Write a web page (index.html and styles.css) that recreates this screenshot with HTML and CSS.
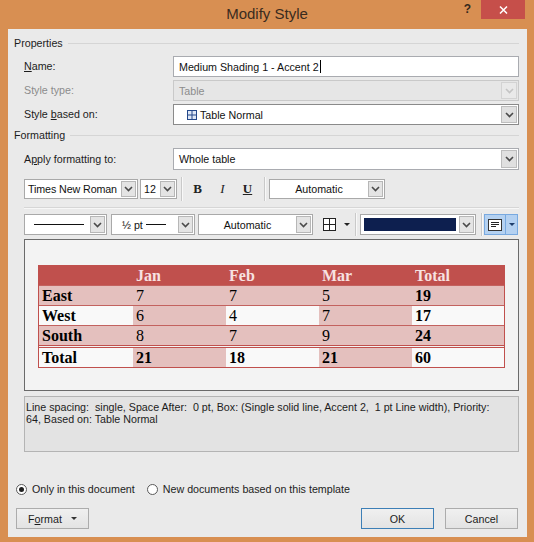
FILE: index.html
```html
<!DOCTYPE html>
<html>
<head>
<meta charset="utf-8">
<title>Modify Style</title>
<link rel="stylesheet" href="styles.css">
</head>
<body>
<div class="window">
  <div class="titlebar">
    <div></div>
    <div class="title">Modify Style</div>
    <div class="controls">
      <span class="help">?</span>
      <span class="close"><svg width="9" height="8" viewBox="0 0 9 8"><path d="M1 0.5 L8 7.5 M8 0.5 L1 7.5" stroke="#fff" stroke-width="1.5" fill="none"/></svg></span>
    </div>
  </div>
  <div class="panel">
    <div class="group-head"><span>Properties</span><i></i></div>
    <div class="props">
      <label class="lbl"><u>N</u>ame:</label>
      <div class="field"><span class="val">Medium Shading 1 - Accent 2</span><span class="caret"></span></div>
      <label class="lbl disabled">Style type:</label>
      <div class="field disabled"><span class="val">Table</span><span class="arrow"><svg width="9" height="6" viewBox="0 0 9 6"><path d="M1 1 L4.5 4.5 L8 1" stroke="#c4c4c4" stroke-width="1.6" fill="none"/></svg></span></div>
      <label class="lbl">Style <u>b</u>ased on:</label>
      <div class="field dark"><span class="val icon-val"><svg class="tblicon" width="10" height="10" viewBox="0 0 10 10"><rect x="0.5" y="0.5" width="9" height="9" fill="#dfe8f6" stroke="#24488a"/><path d="M5 0.5 V9.5 M0.5 5 H9.5" stroke="#24488a"/></svg>Table Normal</span><span class="arrow"><svg width="9" height="6" viewBox="0 0 9 6"><path d="M1 1 L4.5 4.5 L8 1" stroke="#4a4a4a" stroke-width="1.6" fill="none"/></svg></span></div>
    </div>
    <div class="group-head second"><span>Formatting</span><i></i></div>
    <div class="props apply">
      <label class="lbl">A<u>p</u>ply formatting to:</label>
      <div class="field tall"><span class="val">Whole table</span><span class="arrow"><svg width="9" height="6" viewBox="0 0 9 6"><path d="M1 1 L4.5 4.5 L8 1" stroke="#4a4a4a" stroke-width="1.6" fill="none"/></svg></span></div>
    </div>

    <div class="toolbar tb1">
      <div class="combo w-font"><span class="ctext">Times New Roman</span><span class="carrow"><svg width="9" height="6" viewBox="0 0 9 6"><path d="M1 1 L4.5 4.5 L8 1" stroke="#4a4a4a" stroke-width="1.6" fill="none"/></svg></span></div>
      <div class="combo w-size"><span class="ctext">12</span><span class="carrow"><svg width="9" height="6" viewBox="0 0 9 6"><path d="M1 1 L4.5 4.5 L8 1" stroke="#4a4a4a" stroke-width="1.6" fill="none"/></svg></span></div>
      <span class="sep s1"></span>
      <span class="fbtn bold">B</span>
      <span class="fbtn ital">I</span>
      <span class="fbtn und">U</span>
      <span class="sep s2"></span>
      <div class="combo w-auto1"><span class="ctext center">Automatic</span><span class="carrow"><svg width="9" height="6" viewBox="0 0 9 6"><path d="M1 1 L4.5 4.5 L8 1" stroke="#4a4a4a" stroke-width="1.6" fill="none"/></svg></span></div>
    </div>
    <div class="divider"></div>
    <div class="toolbar tb2">
      <div class="combo w-line"><span class="ctext"><span class="linesample"></span></span><span class="carrow"><svg width="9" height="6" viewBox="0 0 9 6"><path d="M1 1 L4.5 4.5 L8 1" stroke="#4a4a4a" stroke-width="1.6" fill="none"/></svg></span></div>
      <div class="combo w-pt"><span class="ctext pt">½ pt<span class="ptline"></span></span><span class="carrow"><svg width="9" height="6" viewBox="0 0 9 6"><path d="M1 1 L4.5 4.5 L8 1" stroke="#4a4a4a" stroke-width="1.6" fill="none"/></svg></span></div>
      <div class="combo w-auto2"><span class="ctext center">Automatic</span><span class="carrow"><svg width="9" height="6" viewBox="0 0 9 6"><path d="M1 1 L4.5 4.5 L8 1" stroke="#4a4a4a" stroke-width="1.6" fill="none"/></svg></span></div>
      <span class="borderbtn"><svg width="13" height="13" viewBox="0 0 13 13"><rect x="0.5" y="0.5" width="12" height="12" fill="#fff" stroke="#222"/><path d="M6.5 0.5 V12.5 M0.5 6.5 H12.5" stroke="#222"/></svg><span class="tri"></span></span>
      <span class="sep s3"></span>
      <div class="combo w-color"><span class="swatch"></span><span class="carrow"><svg width="9" height="6" viewBox="0 0 9 6"><path d="M1 1 L4.5 4.5 L8 1" stroke="#4a4a4a" stroke-width="1.6" fill="none"/></svg></span></div>
      <span class="sep s4"></span>
      <span class="alignbtn"><span class="aicon"><svg width="14" height="12" viewBox="0 0 14 12"><rect x="0.5" y="0.5" width="13" height="11" fill="#fff" stroke="#333"/><path d="M3 3.5 H11 M3 5.5 H11 M3 7.5 H8" stroke="#222"/></svg></span><span class="adrop"><span class="tri blue"></span></span></span>
    </div>

    <div class="preview">
      <div class="tbl">
        <div class="row hdr"><span></span><span>Jan</span><span>Feb</span><span>Mar</span><span>Total</span></div>
        <div class="row band"><span class="b">East</span><span>7</span><span>7</span><span>5</span><span class="b">19</span></div>
        <div class="row"><span class="b">West</span><span class="pk">6</span><span>4</span><span class="pk">7</span><span class="b">17</span></div>
        <div class="row band"><span class="b">South</span><span>8</span><span>7</span><span>9</span><span class="b">24</span></div>
        <div class="row tot"><span class="b">Total</span><span class="pk b">21</span><span class="b">18</span><span class="pk b">21</span><span class="b">60</span></div>
      </div>
    </div>

    <div class="desc">Line spacing:&nbsp; single, Space After:&nbsp; 0 pt, Box: (Single solid line, Accent 2,&nbsp; 1 pt Line width), Priority:<br>64, Based on: Table Normal</div>

    <div class="radios">
      <span class="radio on"></span><span class="rlabel">Only in this document</span>
      <span class="radio r2"></span><span class="rlabel">New documents based on this template</span>
    </div>

    <div class="buttons">
      <span class="btn fmt">F<u>o</u>rmat<span class="tri small"></span></span>
      <span class="spacer"></span>
      <span class="btn ok">OK</span>
      <span class="btn cancel">Cancel</span>
    </div>
  </div>
</div>
</body>
</html>
```

FILE: styles.css
```css
* { box-sizing: border-box; }
html, body { margin: 0; padding: 0; }
body {
  width: 534px;
  height: 542px;
  overflow: hidden;
  background: #d88f52;
  font-family: "Liberation Sans", Arial, sans-serif;
  font-size: 10.7px;
  color: #1c1c1c;
}
u { text-decoration: underline; text-underline-offset: 1px; }

.window {
  display: flex;
  flex-direction: column;
  height: 542px;
  padding: 0 7px 5px 8px;
}
.titlebar {
  height: 29px;
  margin: 0 -7px 0 -8px;
  display: grid;
  grid-template-columns: 1fr auto 1fr;
}
.title {
  font-size: 15px;
  line-height: 20px;
  padding-top: 4px;
  color: #3a2b1e;
}
.controls {
  display: flex;
  justify-content: flex-end;
  align-items: flex-start;
  padding-right: 9px;
}
.help {
  font-weight: bold;
  font-size: 12px;
  line-height: 14px;
  padding-top: 2px;
  margin-right: 10px;
  color: #35281c;
}
.close {
  width: 44px;
  height: 19px;
  background: #c64f4a;
  display: flex;
  align-items: center;
  justify-content: center;
}

.panel {
  flex: 1;
  background: #eaeaea;
  padding: 6px 8px 0 6px;
  display: flex;
  flex-direction: column;
}
.group-head {
  display: flex;
  align-items: center;
  height: 16px;
  gap: 5px;
  color: #1c1c1c;
}
.group-head i {
  flex: 1;
  height: 1px;
  background: #d5d5d5;
  margin-top: 1px;
}
.group-head.second { margin-top: 2px; }

.props {
  margin: 5px 0 0 10px;
  display: grid;
  grid-template-columns: 149px 1fr;
  grid-auto-rows: 21px;
  row-gap: 3px;
}
.props.apply { grid-auto-rows: 22px; }
.lbl {
  display: block;
  line-height: 21px;
  white-space: nowrap;
  color: #1c1c1c;
}
.props.apply .lbl { line-height: 22px; }
.lbl.disabled { color: #8c8c8c; }
.field {
  height: 21px;
  border: 1px solid #a9abb0;
  background: #fff;
  display: flex;
  align-items: center;
  padding-left: 5px;
  color: #111;
}
.field.tall { height: 22px; }
.field.dark { border-color: #8a8a8a; }
.field.disabled {
  background: #e6e6e6;
  border-color: #c9c9c9;
  color: #8c8c8c;
}
.caret {
  width: 1px;
  height: 13px;
  background: #000;
  margin-left: 1px;
}
.icon-val {
  display: flex;
  align-items: center;
  padding-left: 8px;
}
.tblicon { margin-right: 3px; }
.arrow {
  width: 16px;
  align-self: stretch;
  margin: 1px 1px 1px auto;
  background: #e0e0e0;
  border: 1px solid #bdbdbd;
  display: flex;
  align-items: center;
  justify-content: center;
}
.field.disabled .arrow { background: #e9e9e9; border-color: #d3d3d3; }

.toolbar {
  margin-left: 10px;
  display: flex;
  align-items: center;
}
.tb1 { margin-top: 9px; height: 20px; }
.tb2 { margin-top: 5px; height: 21px; }
.combo {
  height: 20px;
  border: 1px solid #a9a9a9;
  background: #fff;
  display: flex;
  align-items: center;
  padding: 1px;
  color: #111;
}
.tb2 .combo { height: 21px; }
.ctext {
  flex: 1;
  min-width: 0;
  padding-left: 3px;
  white-space: nowrap;
  display: flex;
  align-items: center;
}
.w-font .ctext { padding-left: 2px; letter-spacing: -0.1px; }
.ctext.center { justify-content: center; padding-left: 0; }
.carrow {
  width: 15px;
  flex: none;
  align-self: stretch;
  background: #e4e4e4;
  border: 1px solid #b7b7b7;
  display: flex;
  align-items: center;
  justify-content: center;
  margin-left: 1px;
}
.w-font { width: 114px; }
.w-size { width: 37px; margin-left: 2px; }
.w-size .ctext { padding-left: 2px; }
.sep {
  width: 1px;
  height: 24px;
  background: #c9c9c9;
  box-shadow: 1px 0 0 #f8f8f8;
}
.s1 { margin-left: 4px; }
.s2 { margin-left: 4px; }
.fbtn {
  width: 25px;
  text-align: center;
  font-family: "Liberation Serif", serif;
  font-size: 13px;
  color: #222;
}
.bold { font-weight: bold; margin-left: 3px; }
.ital { font-style: italic; }
.und { font-weight: bold; text-decoration: underline; text-underline-offset: 1px; }
.w-auto1 { width: 116px; margin-left: 4px; }

.divider {
  margin: 8px 0 0 10px;
  height: 2px;
  border-top: 1px solid #d6d6d6;
  border-bottom: 1px solid #f7f7f7;
}

.w-line { width: 83px; }
.linesample {
  width: 50px;
  height: 1px;
  background: #111;
  margin-left: 5px;
}
.w-pt { width: 84px; margin-left: 4px; }
.ctext.pt { padding-left: 9px; }
.ptline {
  width: 20px;
  height: 1px;
  background: #111;
  margin-left: 3px;
}
.w-auto2 { width: 115px; margin-left: 3px; }
.borderbtn {
  display: flex;
  align-items: center;
  margin-left: 10px;
}
.tri {
  width: 0;
  height: 0;
  border-left: 3px solid transparent;
  border-right: 3px solid transparent;
  border-top: 3px solid #222;
  margin-left: 8px;
}
.tri.blue { border-top-color: #1d3d6b; margin-left: 0; }
.s3 { margin-left: 5px; height: 23px; }
.w-color { width: 116px; margin-left: 4px; }
.swatch {
  flex: 1;
  align-self: stretch;
  margin: 2px 2px;
  background: #0d1f4f;
}
.s4 { margin-left: 5px; height: 23px; }
.alignbtn {
  margin-left: 2px;
  width: 34px;
  height: 21px;
  display: flex;
  background: #b4d1f1;
  border: 1px solid #78a9e0;
}
.aicon {
  width: 21px;
  display: flex;
  align-items: center;
  justify-content: center;
  border-right: 1px solid #78a9e0;
}
.adrop {
  flex: 1;
  display: flex;
  align-items: center;
  justify-content: center;
}

.preview {
  margin: 4px 0 0 10px;
  height: 152px;
  border: 1px solid #6a6a6a;
  background: #f3f3f3;
  padding: 25px 0 0 13px;
}
.tbl {
  width: 467px;
  border: 1px solid #c0504d;
  font-family: "Liberation Serif", serif;
  font-size: 16px;
  color: #000;
}
.row {
  display: grid;
  grid-template-columns: 94px 93px 93px 93px 92px;
  border-top: 1px solid #c3625f;
}
.row > span {
  height: 19px;
  line-height: 20px;
  padding-left: 3px;
  background: #f9f9f9;
  white-space: nowrap;
}
.row.hdr { border-top: none; }
.row.hdr > span {
  background: #c0504d;
  color: #f7e2e1;
  font-weight: bold;
}
.row.band > span, .row > span.pk { background: #e4c0be; }
.row.tot { border-top: 3px double #c0504d; }
.b { font-weight: bold; }

.desc {
  margin: 5px 0 0 10px;
  height: 56px;
  border: 1px solid #b4b4b4;
  background: #e3e3e3;
  padding: 4px 0 0 1px;
  line-height: 12px;
  white-space: nowrap;
  color: #1c1c1c;
}

.radios {
  margin: 29px 0 0 2px;
  height: 16px;
  display: flex;
  align-items: center;
}
.radio {
  width: 11px;
  height: 11px;
  border-radius: 50%;
  border: 1px solid #5a5a5a;
  background: #fff;
  display: flex;
  align-items: center;
  justify-content: center;
  margin-right: 5px;
}
.radio.on::after {
  content: "";
  width: 5px;
  height: 5px;
  border-radius: 50%;
  background: #1e1e1e;
}
.radio.r2 { margin-left: 12px; }

.buttons {
  margin: 11px 0 0 2px;
  display: flex;
  height: 21px;
}
.btn {
  width: 73px;
  height: 21px;
  border: 1px solid #acacac;
  background: linear-gradient(#f0f0f0, #e3e3e3);
  display: flex;
  align-items: center;
  justify-content: center;
  color: #1c1c1c;
}
.btn.fmt { justify-content: flex-start; padding-left: 11px; }
.tri.small { margin-left: 9px; border-top-color: #333; }
.spacer { flex: 1; }
.btn.ok { border-color: #3d7fb6; }
.btn.cancel { margin-left: 11px; margin-right: 1px; }
```
